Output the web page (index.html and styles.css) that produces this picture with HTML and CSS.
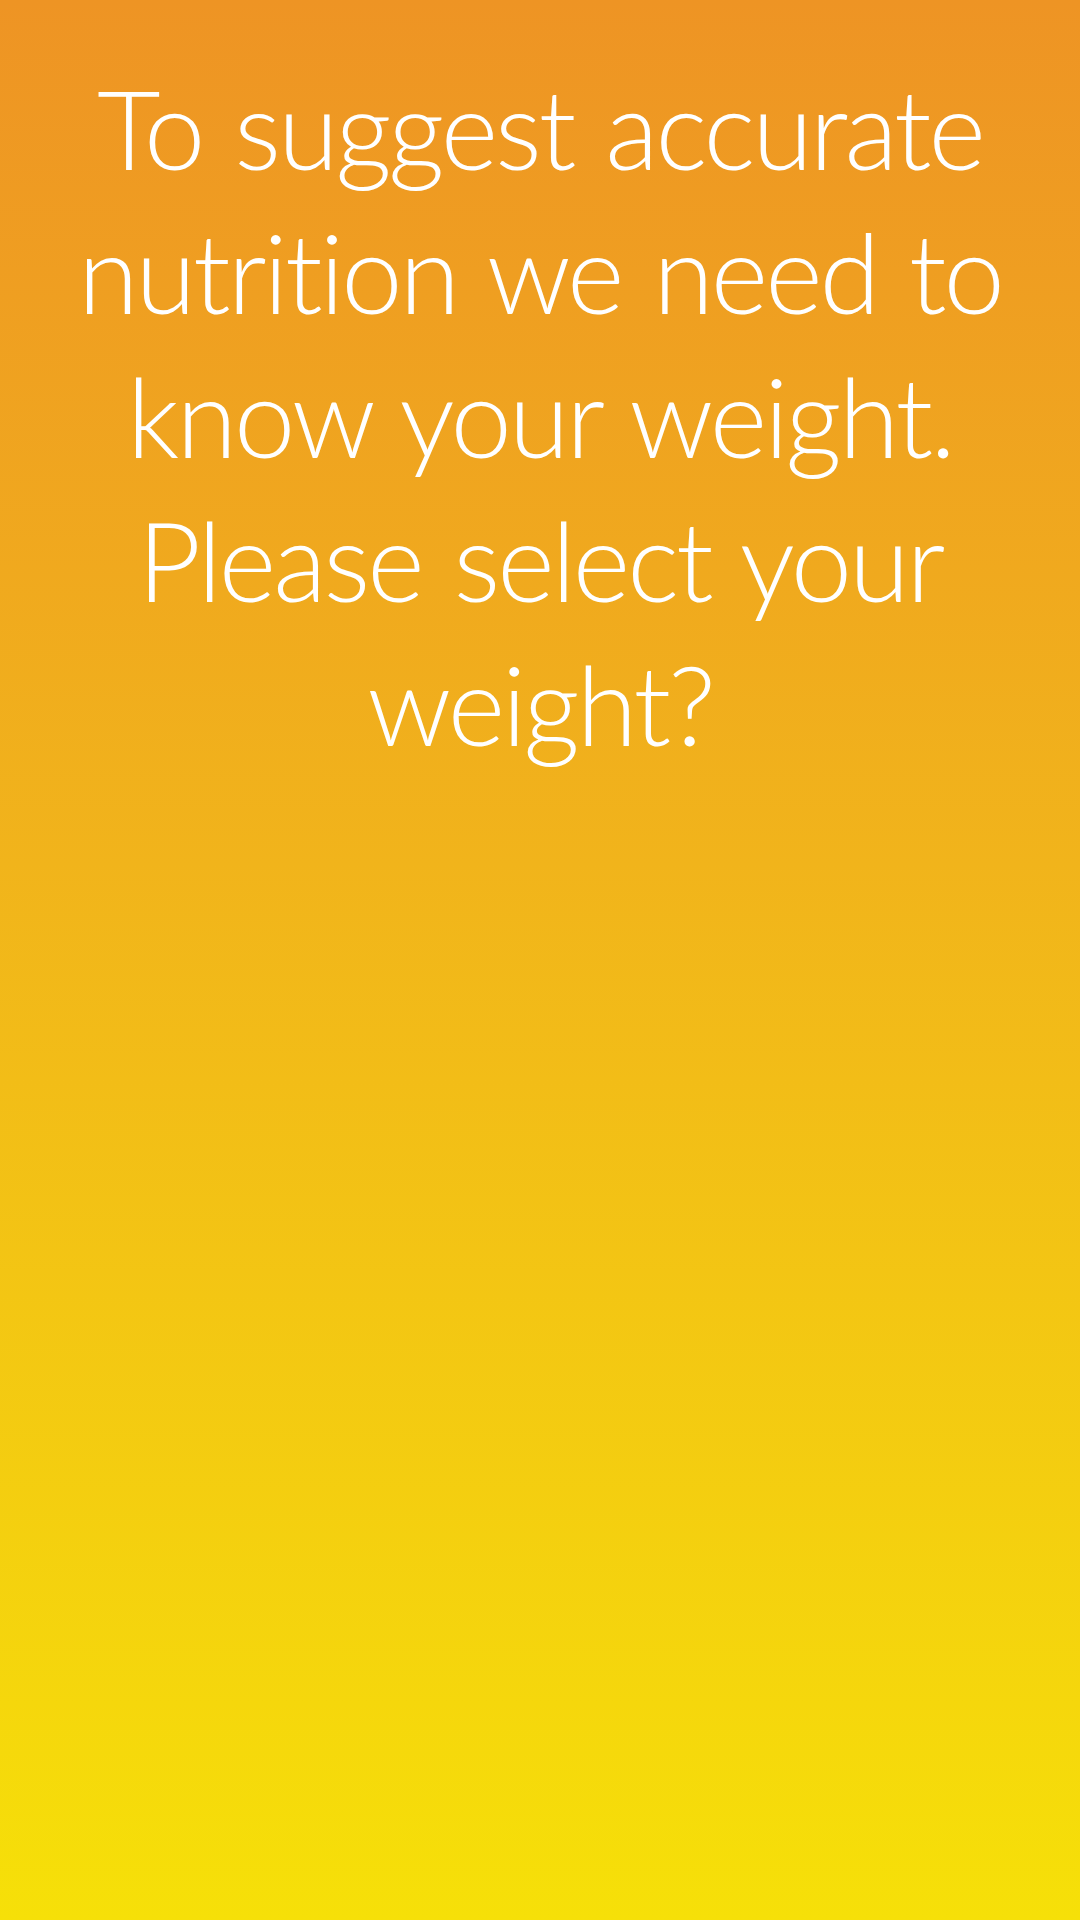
FILE: index.html
```html
<!DOCTYPE html>
<html lang="en">
<head>
<meta charset="utf-8">
<title>Select your weight</title>
<link rel="stylesheet" href="styles.css">
</head>
<body>
<main class="screen">
  <h1 class="prompt">To suggest accurate<br>nutrition we need to<br>know your weight.<br>Please select your<br>weight?</h1>
</main>
</body>
</html>
```
FILE: styles.css
```css
html, body {
  margin: 0;
  padding: 0;
}
body {
  width: 1080px;
  height: 1920px;
  overflow: hidden;
}
.screen {
  box-sizing: border-box;
  width: 1080px;
  height: 1920px;
  padding-top: 55px;
  background: linear-gradient(180deg, #ee9424 0%, #f1b41b 45%, #f6e008 100%);
  display: flex;
  flex-direction: column;
  align-items: center;
}
.prompt {
  margin: 0;
  font-family: "Lato", "Liberation Sans", sans-serif;
  font-weight: 300;
  font-size: 110px;
  line-height: 144px;
  color: #ffffff;
  text-align: center;
  letter-spacing: -3px;
  word-spacing: 5px;
  font-variant-ligatures: none;
}
```
